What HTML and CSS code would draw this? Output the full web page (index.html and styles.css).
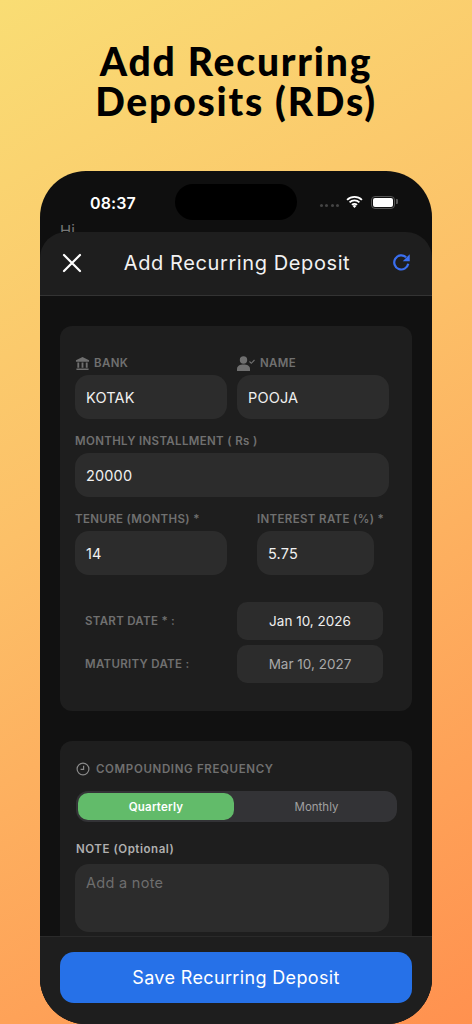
FILE: index.html
```html
<!DOCTYPE html>
<html lang="en">
<head>
<meta charset="utf-8">
<title>Add Recurring Deposits</title>
<link rel="stylesheet" href="styles.css">
</head>
<body>
<main class="page">
  <h1 class="headline">Add Recurring<br>Deposits (RDs)</h1>
  <section class="phone">
    <div class="status">
      <div class="status-row">
        <span class="clock">08:37</span>
        <span class="island"></span>
        <span class="status-icons">
          <span class="dots"><i></i><i></i><i></i><i></i></span>
          <svg class="wifi" viewBox="0 0 18 14" width="17" height="13"><path d="M1 5.200a11.500 11.500 0 0 1 16 0M3.700 8a7.500 7.500 0 0 1 10.600 0M6.300 10.700a3.700 3.700 0 0 1 5.400 0" fill="none" stroke="#fff" stroke-width="2"/><path d="M9 14l-2-2.200a2.800 2.800 0 0 1 4 0z" fill="#fff"/></svg>
          <span class="battery"><span class="battery-fill"></span></span>
        </span>
      </div>
      <span class="hi">Hi</span>
    </div>
    <div class="sheet">
      <header class="sheet-head">
        <svg class="close" viewBox="0 0 20 20" width="20" height="20"><path d="M2 2l16 16M18 2L2 18" stroke="#fff" stroke-width="2.200" stroke-linecap="round" fill="none"/></svg>
        <h2 class="sheet-title">Add Recurring Deposit</h2>
        <svg class="refresh" viewBox="0 0 18 18" width="19" height="19"><path d="M15.400 10.200A6.700 6.700 0 1 1 13.400 4" fill="none" stroke="#3a6ff0" stroke-width="2.100"/><path d="M16.800 1.200v6.600h-6.600z" fill="#3a6ff0"/></svg>
      </header>
      <div class="scroll">
        <section class="card card-main">
          <div class="row two">
            <div class="field">
              <label class="label"><svg class="ico" viewBox="0 0 16 16" width="15" height="15"><path d="M8 1l7 3.400V6H1V4.400zM2.500 7h2v5.500h-2zM7 7h2v5.500H7zM11.500 7h2v5.500h-2zM1.500 13.300h13V15h-13z" fill="#6f6f6f"/></svg>BANK</label>
              <div class="input">KOTAK</div>
            </div>
            <div class="field">
              <label class="label"><svg class="ico person" viewBox="0 0 18 15" width="18" height="15"><circle cx="6.500" cy="4" r="3.700" fill="#6f6f6f"/><path d="M0 15v-2.300C0 10 3 8.500 6.500 8.500S13 10 13 12.700V15z" fill="#6f6f6f"/><path d="M12.500 5.500l1.800 1.800L17.500 4" fill="none" stroke="#6f6f6f" stroke-width="1.100"/></svg>NAME</label>
              <div class="input">POOJA</div>
            </div>
          </div>
          <div class="field">
            <label class="label">MONTHLY INSTALLMENT ( Rs )</label>
            <div class="input">20000</div>
          </div>
          <div class="row tenure">
            <div class="field">
              <label class="label">TENURE (MONTHS) *</label>
              <div class="input">14</div>
            </div>
            <div class="field">
              <label class="label">INTEREST RATE (%) *</label>
              <div class="input">5.75</div>
            </div>
          </div>
          <div class="dates">
            <div class="date-row">
              <span class="date-label">START DATE * :</span>
              <span class="date-box">Jan 10, 2026</span>
            </div>
            <div class="date-row">
              <span class="date-label">MATURITY DATE :</span>
              <span class="date-box muted">Mar 10, 2027</span>
            </div>
          </div>
        </section>
        <section class="card card-second">
          <div class="label freq-label"><svg class="ico" viewBox="0 0 14 14" width="14" height="14"><circle cx="7" cy="7" r="5.900" fill="none" stroke="#8a8a8a" stroke-width="1.200"/><path d="M7.600 3.800v3.600H4.600" fill="none" stroke="#8a8a8a" stroke-width="1.200"/></svg>COMPOUNDING FREQUENCY</div>
          <div class="segment">
            <span class="seg seg-on">Quarterly</span>
            <span class="seg seg-off">Monthly</span>
          </div>
          <div class="label note-label">NOTE (Optional)</div>
          <div class="textarea">Add a note</div>
        </section>
      </div>
      <footer class="footer">
        <button class="save" type="button">Save Recurring Deposit</button>
      </footer>
    </div>
  </section>
</main>
</body>
</html>
```
FILE: styles.css
```css
* { box-sizing: border-box; }
html, body { margin: 0; height: 1024px; overflow: hidden; }
body { font-family: Inter, "Liberation Sans", sans-serif; }
.page {
  height: 1024px;
  padding-top: 41px;
  display: flex;
  flex-direction: column;
  align-items: center;
  overflow: hidden;
  background: linear-gradient(150deg, #f9dd74 0%, #fcc068 42%, #ff914f 100%);
}
.headline {
  margin: 0 0 50px;
  font-family: Lato, sans-serif;
  font-weight: 900;
  font-size: 39px;
  line-height: 40px;
  letter-spacing: 1.800px;
  text-align: center;
  color: #000;
}
.phone {
  width: 392px;
  height: 853px;
  flex: none;
  display: flex;
  flex-direction: column;
  background: #0f0f0f;
  border-radius: 46px;
  overflow: hidden;
}
.status { height: 61px; flex: none; padding: 13px 37px 0 50px; overflow: hidden; }
.status-row { height: 37px; display: flex; align-items: center; justify-content: space-between; position: relative; }
.clock { font-size: 16px; font-weight: 600; color: #fff; letter-spacing: .1px; }
.island { position: absolute; left: 85px; top: 0; width: 122px; height: 36px; border-radius: 18px; background: #000; }
.status-icons { display: flex; align-items: center; gap: 7px; }
.dots { display: flex; gap: 2.300px; margin-top: 5px; }
.dots i { width: 3px; height: 3px; border-radius: 50%; background: #444; }
.wifi { display: block; margin-bottom: 2px; margin-right: 1px; }
.battery { width: 24px; height: 13px; border: 1.500px solid #555; border-radius: 4px; padding: 1px; position: relative; margin-bottom: 1px; }
.battery::after { content: ""; position: absolute; right: -3.500px; top: 2.500px; width: 1.500px; height: 5px; border-radius: 0 1px 1px 0; background: #555; }
.battery-fill { display: block; height: 100%; background: #fff; border-radius: 2px; }
.hi { display: block; margin: 1px 0 0 -30px; font-size: 15px; line-height: 18px; color: #777; }
.sheet {
  flex: 1;
  min-height: 0;
  display: flex;
  flex-direction: column;
  background: #1e1e1e;
  border-radius: 26px 26px 0 0;
  overflow: hidden;
}
.sheet-head {
  height: 64px;
  flex: none;
  padding: 0 21px 2px 22px;
  display: flex;
  align-items: center;
  justify-content: space-between;
  border-bottom: 1px solid #333;
}
.sheet-title { margin: 0; font-size: 20px; font-weight: 400; letter-spacing: .6px; color: #f2f2f2; }
.scroll { flex: 1; min-height: 0; overflow: hidden; background: #111; padding: 30px 20px 0; }
.card { background: #1e1e1e; border-radius: 12px; padding: 0 15px; }
.card-main { height: 385px; padding: 27px 23px 0 15px; margin-bottom: 30px; }
.card-second { height: 220px; padding-top: 18px; }
.row { display: flex; }
.two { gap: 10px; }
.two .field { width: 152px; }
.tenure { gap: 30px; }
.tenure .field:first-child { width: 152px; }
.tenure .field:last-child { width: 117px; }
.field { margin-bottom: 12px; }
.label {
  display: flex;
  align-items: center;
  height: 20px;
  margin-bottom: 2px;
  font-size: 11.500px;
  font-weight: 600;
  letter-spacing: .35px;
  color: #707070;
  white-space: nowrap;
}
.ico { flex: none; margin-right: 4px; }
.person { margin-right: 5px; }
.input {
  height: 44px;
  display: flex;
  align-items: center;
  padding: 0 11px;
  background: #2c2c2c;
  border-radius: 14px;
  font-size: 14.500px;
  font-weight: 400;
  letter-spacing: .15px;
  color: #f0f0f0;
}
.dates { margin-top: 15px; display: flex; flex-direction: column; gap: 5px; }
.date-row { display: flex; align-items: center; justify-content: space-between; padding: 0 6px 0 10px; height: 38px; }
.date-label { font-size: 11.500px; font-weight: 600; letter-spacing: .3px; color: #707070; }
.date-box {
  width: 146px;
  height: 38px;
  display: flex;
  align-items: center;
  justify-content: center;
  background: #2c2c2c;
  border-radius: 10px;
  font-size: 13.500px;
  color: #efefef;
}
.muted { color: #a8a8a8; }
.freq-label { gap: 2px; margin-bottom: 12px; padding-left: 1px; letter-spacing: .65px; }
.segment {
  width: 321px;
  height: 31px;
  padding: 2px;
  margin-left: 1px;
  display: flex;
  background: #333336;
  border-radius: 12px;
}
.seg { flex: 1; display: flex; align-items: center; justify-content: center; font-size: 11.500px; font-weight: 400; color: #a0a0a0; }
.seg-off { padding-left: 4px; }
.seg-on { flex: none; width: 156px; background: #62bb6a; color: #fff; border-radius: 10px; font-weight: 600; letter-spacing: .2px; }
.note-label { margin-top: 17px; margin-bottom: 5px; padding-left: 1px; letter-spacing: .55px; color: #b0b0b0; }
.textarea {
  width: 314px;
  height: 68px;
  padding: 10px 11px;
  background: #2c2c2c;
  border-radius: 14px;
  font-size: 14.500px;
  letter-spacing: .3px;
  color: #6e6e6e;
}
.footer { height: 88px; flex: none; padding: 15px 20px 0; background: #1e1e1e; border-top: 1px solid #2a2a2a; }
.save {
  width: 100%;
  height: 51px;
  border: 0;
  border-radius: 14px;
  background: #2671e8;
  color: #fff;
  font-family: Inter, sans-serif;
  font-size: 18px;
  font-weight: 400;
  letter-spacing: .35px;
}
```
